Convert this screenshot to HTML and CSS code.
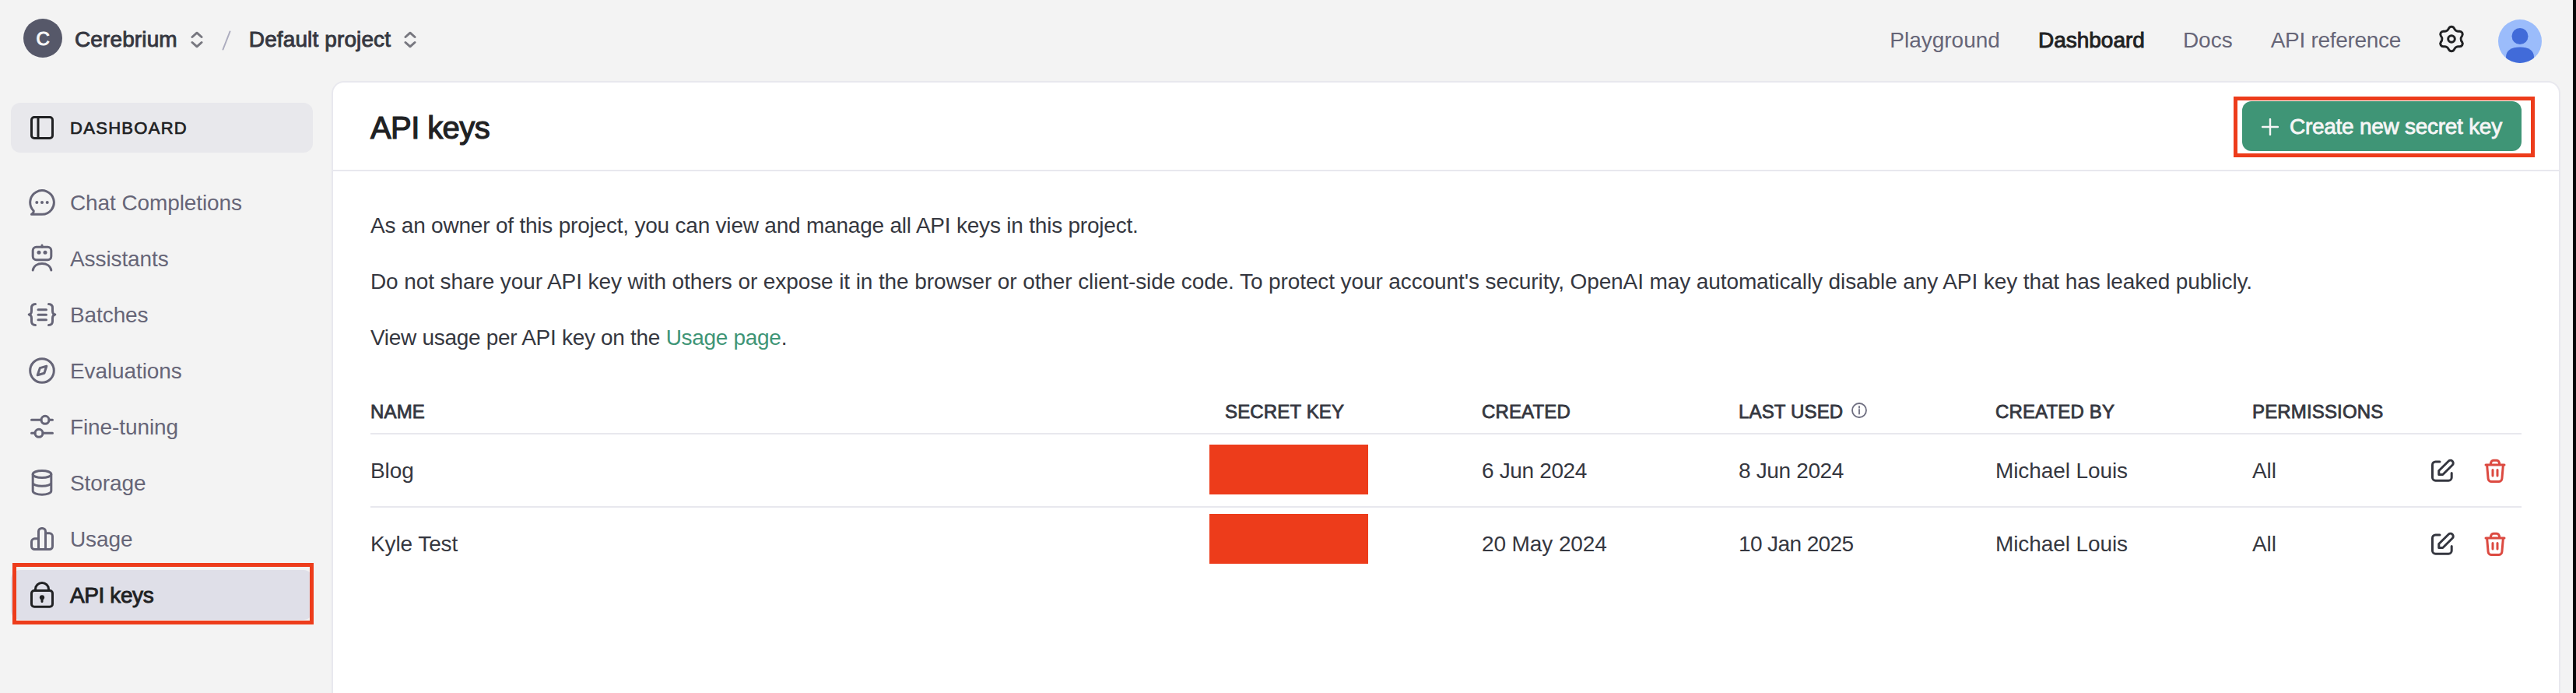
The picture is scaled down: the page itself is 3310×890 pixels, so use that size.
FILE: index.html
```html
<!DOCTYPE html>
<html lang="en">
<head>
<meta charset="utf-8">
<title>API keys</title>
<link rel="stylesheet" href="styles.css">
</head>
<body>
<svg class="defs" aria-hidden="true">
  <symbol id="updown" viewBox="0 0 16 24"><path d="M2 8.5l6-5.3 6 5.3M2 15.5l6 5.3 6-5.3"/></symbol>
  <symbol id="edit" viewBox="0 0 40 40"><path d="M16 9h-5.5a4 4 0 0 0-4 4v16.200a4 4 0 0 0 4 4h16.700a4 4 0 0 0 4-4V23.500"/><path d="M14.800 25.500v-5L27.200 8.200a3.500 3.500 0 0 1 5 5L19.800 25.500z"/></symbol>
  <symbol id="trash" viewBox="0 0 40 40"><path d="M8 13h24M14.300 12.500c.2-3.500 1.400-5.300 3.700-5.300h4c2.300 0 3.500 1.800 3.700 5.300M9.600 13l1.500 17.600a4.200 4.200 0 0 0 4.200 3.900h9.400a4.200 4.200 0 0 0 4.200-3.900L30.400 13M17 19.500v7.500M23 19.500v7.500"/></symbol>
</svg>
<div class="app">
  <header class="topbar">
    <div class="crumbs">
      <span class="org-avatar">C</span>
      <span class="crumb">Cerebrium</span>
      <svg class="updown"><use href="#updown"/></svg>
      <svg class="slash" viewBox="0 0 12 26"><path d="M10.500 1.500l-9 23"/></svg>
      <span class="crumb">Default project</span>
      <svg class="updown"><use href="#updown"/></svg>
    </div>
    <nav class="topnav">
      <a>Playground</a>
      <a class="current">Dashboard</a>
      <a>Docs</a>
      <a class="api-ref">API reference</a>
      <svg class="icon gear" viewBox="0 0 40 40"><g transform="translate(20 20)"><path d="M-3.400-13.700A3.800 3.800 0 0 1 3.400-13.700A6 6 0 0 0 10.100-9.800A3.800 3.800 0 0 1 13.600-3.900A6 6 0 0 0 13.600 3.900A3.800 3.800 0 0 1 10.100 9.800A6 6 0 0 0 3.400 13.700A3.800 3.800 0 0 1-3.400 13.700A6 6 0 0 0-10.100 9.800A3.800 3.800 0 0 1-13.600 3.900A6 6 0 0 0-13.600-3.900A3.800 3.800 0 0 1-10.100-9.800A6 6 0 0 0-3.400-13.700Z"/><circle r="4.300"/></g></svg>
      <svg class="user" viewBox="0 0 56 56"><defs><clipPath id="round"><circle cx="28" cy="28" r="28"/></clipPath></defs><g clip-path="url(#round)"><rect width="56" height="56" fill="#9bbcfb"/><circle cx="28" cy="21.500" r="10.500" fill="#416bd9"/><path d="M10 60V48c0-8 7-12.500 18-12.500S46 40 46 48v12z" fill="#416bd9"/></g></svg>
    </nav>
  </header>
  <div class="columns">
    <aside class="sidebar">
      <div class="item section"><svg class="icon" viewBox="0 0 40 40"><rect x="6.500" y="6.500" width="27" height="27" rx="3.500"/><path d="M15 6.500v27"/></svg><span>DASHBOARD</span></div>
      <div class="item"><svg class="icon" viewBox="0 0 40 40"><path d="M20 35.300H6.500c2-1.300 2.900-2.800 2.700-4.500A15.300 15.300 0 1 1 20 35.300Z"/><g class="solid"><circle cx="13.300" cy="20" r="2"/><circle cx="20" cy="20" r="2"/><circle cx="26.700" cy="20" r="2"/></g></svg><span>Chat Completions</span></div>
      <div class="item"><svg class="icon" viewBox="0 0 40 40"><rect x="8.200" y="5.200" width="23.600" height="16.600" rx="4.500"/><path d="M20 3v2M8.200 35c1-5.500 6-8.500 11.800-8.500s10.800 3 11.800 8.500"/><g class="solid"><circle cx="16" cy="12.300" r="2.500"/><circle cx="24" cy="12.300" r="2.500"/></g></svg><span>Assistants</span></div>
      <div class="item"><svg class="icon" viewBox="0 0 40 40"><path d="M11.500 6.500C8 6.500 6.500 8 6.500 11.500v4c0 2.500-1 4-3.300 4.500 2.300.5 3.300 2 3.300 4.500v4c0 3.500 1.500 5 5 5M28.500 6.500c3.500 0 5 1.500 5 5v4c0 2.500 1 4 3.300 4.500-2.300.5-3.300 2-3.300 4.500v4c0 3.500-1.500 5-5 5M15 13.700h10.500M15 20.200h10.500M15 26.700h10.500"/></svg><span>Batches</span></div>
      <div class="item"><svg class="icon" viewBox="0 0 40 40"><circle cx="20" cy="20" r="15.300"/><path d="M25.800 14.200l-8.400 2.400-3.200 9.200 8.700-2.600z"/></svg><span>Evaluations</span></div>
      <div class="item"><svg class="icon" viewBox="0 0 40 40"><path d="M6.500 11.300H19M29 11.300h4.500M6.500 28.300H11M21 28.300h12.500"/><circle cx="24" cy="11.300" r="5"/><circle cx="16" cy="28.300" r="5"/></svg><span>Fine-tuning</span></div>
      <div class="item"><svg class="icon" viewBox="0 0 40 40"><ellipse cx="20" cy="9" rx="11.800" ry="4.600"/><path d="M8.200 9v21.500c0 2.600 5.300 4.700 11.800 4.700s11.800-2.100 11.800-4.700V9M8.200 20c0 2.500 5.300 4.300 11.800 4.300s11.800-1.800 11.800-4.300"/></svg><span>Storage</span></div>
      <div class="item"><svg class="icon" viewBox="0 0 40 40"><path d="M15.500 33.500V10.500a4 4 0 0 1 4-4h1a4 4 0 0 1 4 4v23M15.500 19.800H10.500a4 4 0 0 0-4 4v5.700a4 4 0 0 0 4 4h19a4 4 0 0 0 4-4V16.800a4 4 0 0 0-4-4h-5"/></svg><span>Usage</span></div>
      <div class="item active"><svg class="icon" viewBox="0 0 40 40"><rect x="6.500" y="14.500" width="27" height="20.700" rx="3.500"/><path d="M11.500 14V12.500a8.500 8 0 0 1 17 0V14M20 24v4.500"/><circle class="solid" cx="20" cy="23.300" r="3.100"/></svg><span>API keys</span></div>
    </aside>
    <main class="panel">
      <div class="panel-head">
        <h1>API keys</h1>
        <div class="create"><svg class="plus" viewBox="0 0 22 22"><path d="M11 1v20M1 11h20"/></svg><span>Create new secret key</span></div>
      </div>
      <div class="content">
        <p class="owner">As an owner of this project, you can view and manage all API keys in this project.</p>
        <p class="warning">Do not share your API key with others or expose it in the browser or other client-side code. To protect your account's security, OpenAI may automatically disable any API key that has leaked publicly.</p>
        <p class="usage">View usage per API key on the <a>Usage page</a>.</p>
        <div class="table">
          <div class="row head"><span>NAME</span><span>SECRET KEY</span><span>CREATED</span><span class="last-used">LAST USED<svg class="info" viewBox="0 0 22 22"><circle cx="11" cy="11" r="9"/><path d="M11 10v5.500M11 6v1.800"/></svg></span><span>CREATED BY</span><span>PERMISSIONS</span></div>
          <div class="row"><span>Blog</span><span class="redacted first"></span><span class="date">6 Jun 2024</span><span class="date">8 Jun 2024</span><span>Michael Louis</span><span>All</span><span class="actions"><svg class="icon"><use href="#edit"/></svg><svg class="icon danger"><use href="#trash"/></svg></span></div>
          <div class="row"><span>Kyle Test</span><span class="redacted second"></span><span>20 May 2024</span><span class="date tight">10 Jan 2025</span><span>Michael Louis</span><span>All</span><span class="actions"><svg class="icon"><use href="#edit"/></svg><svg class="icon danger"><use href="#trash"/></svg></span></div>
        </div>
      </div>
    </main>
  </div>
</div>
</body>
</html>
```
FILE: styles.css
```css
* { box-sizing: border-box; }
body {
  margin: 0;
  background: #f3f3f3;
  color: #353740;
  font: 28px/40px "Liberation Sans", Arial, sans-serif;
  letter-spacing: -0.1px;
}
.defs { display: none; }
.app {
  height: 890px;
  overflow: hidden;
  display: flex;
  flex-direction: column;
  border-right: 4px solid #050708;
}
svg { fill: none; stroke: currentColor; stroke-linecap: round; stroke-linejoin: round; flex: none; }
.icon { width: 40px; height: 40px; stroke-width: 3; }
.solid { fill: currentColor; stroke: none; }

/* Top bar */
.topbar {
  height: 104px;
  flex: none;
  display: flex;
  justify-content: space-between;
  padding: 0 40px 0 30px;
}
.crumbs { display: flex; align-items: center; height: 98px; }
.org-avatar {
  width: 50px;
  height: 50px;
  border-radius: 50%;
  background: #565869;
  color: #f7f7f8;
  font-size: 24px;
  line-height: 51px;
  text-align: center;
  -webkit-text-stroke: 1px;
  margin-right: 16px;
}
.crumb { padding-top: 3px; -webkit-text-stroke: 0.9px; letter-spacing: 0.12px; }
.updown { width: 16px; height: 24px; stroke-width: 3; color: #77777f; margin: 3px 24px 0 17px; }
.slash { width: 12px; height: 26px; stroke-width: 2; color: #acacbe; margin: 6px 23px 0 0; }
.topnav { display: flex; align-items: center; height: 100px; color: #666577; }
.topnav a { padding-top: 3px; margin-right: 49px; letter-spacing: 0; }
.topnav .current { color: #202123; -webkit-text-stroke: 0.9px; }
.topnav .api-ref { letter-spacing: -0.3px; margin-right: 45px; }
.gear { color: #202123; }
.user { width: 56px; height: 56px; stroke: none; margin: 6px 0 0 40px; }

/* Sidebar */
.columns { display: flex; flex: 1; min-height: 0; }
.sidebar { width: 426px; flex: none; padding: 28px 24px 0 14px; display: flex; flex-direction: column; gap: 8px; }
.item {
  height: 64px;
  flex: none;
  display: flex;
  align-items: center;
  gap: 16px;
  padding-left: 20px;
  color: #666577;
  border-radius: 12px;
  position: relative;
}
.item span { padding-top: 2px; }
.item.section { background: #e8e8ec; color: #202123; margin-bottom: 24px; }
.section span { font-size: 22px; letter-spacing: 1.3px; -webkit-text-stroke: 0.7px; padding-top: 1px; }
.item.active { background: #dfdfe8; color: #202123; }
.active span { -webkit-text-stroke: 0.9px; letter-spacing: -0.4px; }
.item.active::after,
.create::after {
  content: "";
  position: absolute;
  inset: -9px -1px -6px 2px;
  border: 5px solid #ed3c1b;
}

/* Panel */
.panel {
  flex: 1;
  margin-right: 16px;
  background: #fff;
  border: 2px solid #e8e8ee;
  border-bottom: 0;
  border-radius: 16px 16px 0 0;
}
.panel-head {
  height: 114px;
  display: flex;
  justify-content: space-between;
  padding: 24px 48px 0 48px;
  border-bottom: 2px solid #e8e8ee;
}
h1 {
  margin: 0;
  font-size: 40px;
  line-height: 68px;
  font-weight: 400;
  color: #202123;
  letter-spacing: -0.6px;
  -webkit-text-stroke: 1.2px;
}
.create {
  position: relative;
  width: 359px;
  height: 64px;
  display: flex;
  align-items: center;
  padding-left: 25px;
  gap: 14px;
  background: #3f9576;
  color: #f6f6f6;
  border-radius: 12px;
}
.create::after { inset: -6px -17px -8px -11px; }
.create span { letter-spacing: -0.27px; -webkit-text-stroke: 0.8px; padding-top: 1px; }
.plus { width: 22px; height: 22px; stroke-width: 2.4; margin-top: 2px; }
.content { padding: 50px 48px 0 48px; }
p { margin: 0 0 32px; white-space: nowrap; }
.owner { letter-spacing: -0.21px; }
.usage { letter-spacing: -0.3px; }
.usage a { color: #3f9576; }

/* Key table */
.row {
  display: grid;
  grid-template-columns: 1098px 330px 330px 330px 330px 1fr auto;
  align-items: center;
  height: 92px;
  white-space: nowrap;
}
.row > span { padding-top: 2px; }
.row + .row { height: 94px; border-bottom: 2px solid #e8e8ee; }
.row + .row:last-child { height: 92px; border-bottom: 0; }
.row.head { height: 72px; border-bottom: 2px solid #e8e8ee; font-size: 24px; letter-spacing: 0.15px; -webkit-text-stroke: 0.8px; }
.row.head > span { padding-top: 15px; }
.last-used { display: flex; align-items: center; gap: 10px; }
.info { width: 22px; height: 22px; stroke-width: 1.8; color: #6e6e80; margin-top: -3px; }
.row .date { letter-spacing: -0.35px; }
.row .tight { letter-spacing: -0.6px; }
.redacted { width: 204px; height: 64px; background: #ed3c1b; margin-left: -20px; }
.first { margin-top: -2px; }
.second { margin-top: -12px; }
.row .actions { display: flex; gap: 27px; padding: 0; margin-right: 14px; color: #353740; }
.row .danger { color: #dc4a41; }
```
